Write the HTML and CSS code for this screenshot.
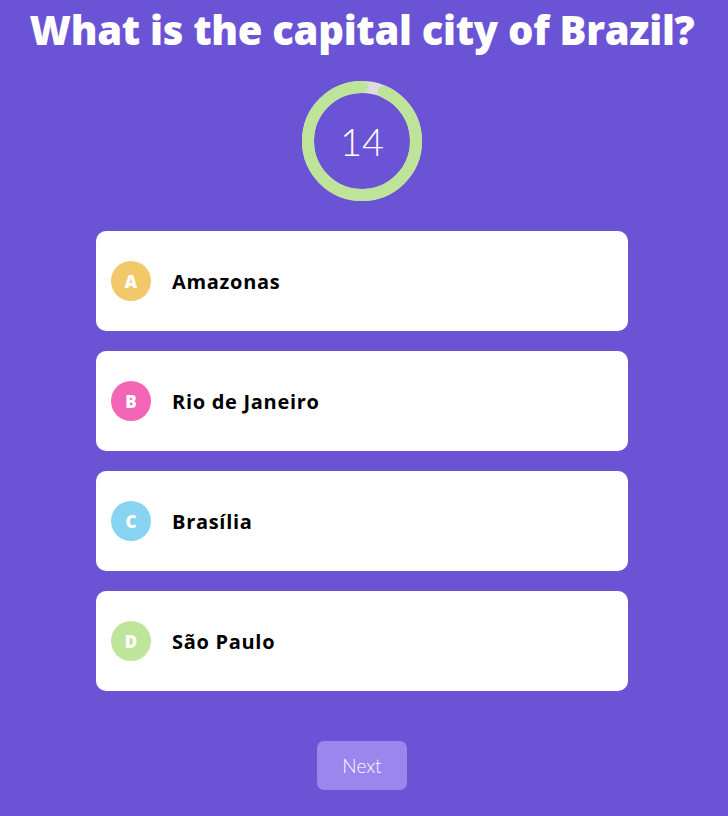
FILE: index.html
```html
<!DOCTYPE html>
<html lang="en">
<head>
<meta charset="utf-8">
<title>Quiz</title>
<link rel="stylesheet" href="styles.css">
</head>
<body>
<main class="quiz">
  <h1 class="question">What is the capital city of Brazil?</h1>
  <div class="timer">
    <svg class="timer-ring" viewBox="0 0 120 120" width="120" height="120">
      <circle class="track" cx="60" cy="60" r="54"></circle>
      <circle class="progress" cx="60" cy="60" r="54" transform="rotate(-90 60 60)"></circle>
    </svg>
    <span class="timer-value">14</span>
  </div>
  <ul class="options">
    <li class="option"><span class="badge badge-a">A</span><span class="label">Amazonas</span></li>
    <li class="option"><span class="badge badge-b">B</span><span class="label">Rio de Janeiro</span></li>
    <li class="option"><span class="badge badge-c">C</span><span class="label">Brasília</span></li>
    <li class="option"><span class="badge badge-d">D</span><span class="label">São Paulo</span></li>
  </ul>
  <button class="next">Next</button>
</main>
</body>
</html>
```
FILE: styles.css
```css
html, body {
  margin: 0;
  padding: 0;
  background: #6b53d6;
}
body {
  font-family: "Open Sans", "Noto Sans", sans-serif;
}
.quiz {
  display: flex;
  flex-direction: column;
  align-items: center;
  padding-right: 4px;
}
.question {
  margin: 0;
  font-family: "Open Sans", sans-serif;
  font-weight: 800;
  font-size: 40px;
  line-height: 60px;
  color: #ffffff;
  letter-spacing: -0.3px;
  white-space: nowrap;
}
.timer {
  margin-top: 21px;
  width: 120px;
  height: 120px;
  position: relative;
  display: flex;
  align-items: center;
  justify-content: center;
}
.timer-ring {
  position: absolute;
  inset: 0;
}
.track {
  fill: none;
  stroke: #dcdcdc;
  stroke-width: 12;
}
.progress {
  fill: none;
  stroke: #bde498;
  stroke-width: 12;
  stroke-linecap: round;
  stroke-dasharray: 316.67 339.29;
  stroke-dashoffset: -22.62;
}
.timer-value {
  position: relative;
  color: #ffffff;
  font-family: "Lato", sans-serif;
  font-weight: 300;
  font-size: 38px;
}
.options {
  list-style: none;
  margin: 30px 0 0;
  padding: 0;
  width: 532px;
  display: flex;
  flex-direction: column;
  gap: 20px;
}
.option {
  height: 100px;
  background: #ffffff;
  border-radius: 10px;
  display: flex;
  align-items: center;
  padding-left: 15px;
  box-sizing: border-box;
}
.badge {
  width: 40px;
  height: 40px;
  border-radius: 50%;
  display: flex;
  align-items: center;
  justify-content: center;
  color: #ffffff;
  font-weight: 800;
  font-size: 17px;
}
.badge-a { background: #f2c86a; }
.badge-b { background: #f266b5; }
.badge-c { background: #88d3f1; }
.badge-d { background: #bfe59a; }
.label {
  margin-left: 21px;
  font-weight: 700;
  font-size: 20px;
  letter-spacing: 0.7px;
  color: #000000;
}
.next {
  margin-top: 50px;
  width: 90px;
  height: 49px;
  border: none;
  border-radius: 7px;
  background: #9a86ec;
  color: #ffffff;
  font-family: "Lato", sans-serif;
  font-weight: 300;
  font-size: 19px;
}
```
